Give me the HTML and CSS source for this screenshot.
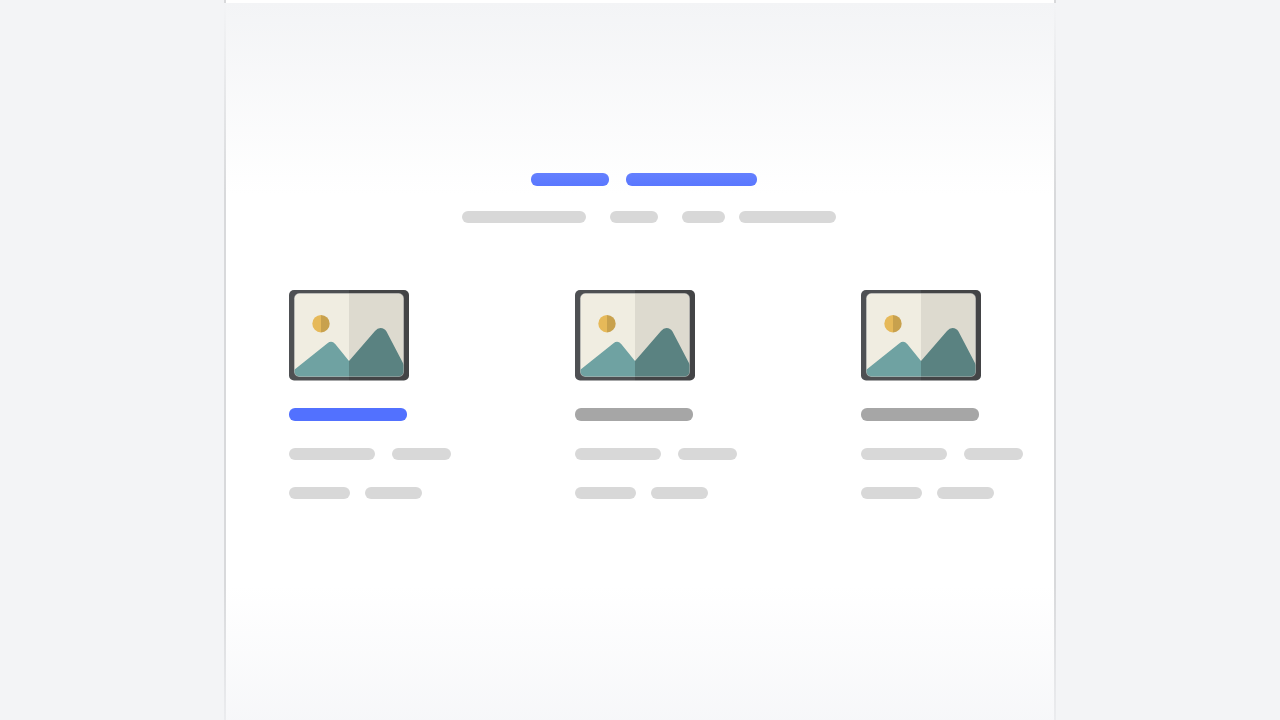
FILE: index.html
```html
<!DOCTYPE html>
<html lang="en">
<head>
<meta charset="utf-8">
<meta name="viewport" content="width=device-width, initial-scale=1">
<title>Page layout</title>
<link rel="stylesheet" href="styles.css">
</head>
<body>
<svg width="0" height="0" class="sprite" aria-hidden="true">
  <defs>
    <clipPath id="canvas"><rect x="5.500" y="3.500" width="109" height="83" rx="5"/></clipPath>
    <clipPath id="frame"><rect x="0" y="0" width="120" height="90.500" rx="5"/></clipPath>
    <symbol id="picture" viewBox="0 0 120 91">
      <g clip-path="url(#frame)">
        <path d="M0 0h60v91H0z" fill="#4e5053"/>
        <path d="M60 0h60v91H60z" fill="#434446"/>
      </g>
      <rect x="5" y="3" width="110" height="84" rx="5.500" fill="#85878a"/>
      <g clip-path="url(#canvas)">
        <path d="M5 3h55v84H5z" fill="#f0ede1"/>
        <path d="M60 3h55v84H60z" fill="#dddacf"/>
        <path d="M5 80L38.500 53.300Q42.500 50 46.200 54L60 71V87H5z" fill="#6fa2a2"/>
        <path d="M60 71L86 41Q88.500 38 91.500 38Q95.500 38 97.500 41.500L115 75V87H60z" fill="#5a8281"/>
      </g>
      <path d="M32 25a8.700 8.700 0 0 0 0 17.400z" fill="#e6b959"/>
      <path d="M32 25a8.700 8.700 0 0 1 0 17.400z" fill="#c8a14d"/>
    </symbol>
  </defs>
</svg>
<main class="sheet">
  <header class="intro">
    <div class="row title">
      <span class="bar accent w78"></span>
      <span class="bar accent w131"></span>
    </div>
    <div class="row subtitle">
      <span class="bar w124"></span>
      <span class="bar w48"></span>
      <span class="bar w43"></span>
      <span class="bar w97"></span>
    </div>
  </header>
  <section class="cards">
    <article class="card">
      <svg class="picture" aria-hidden="true"><use href="#picture"/></svg>
      <span class="bar heading accent"></span>
      <div class="row line"><span class="bar w86"></span><span class="bar w59"></span></div>
      <div class="row line last"><span class="bar w61"></span><span class="bar w57"></span></div>
    </article>
    <article class="card">
      <svg class="picture" aria-hidden="true"><use href="#picture"/></svg>
      <span class="bar heading"></span>
      <div class="row line"><span class="bar w86"></span><span class="bar w59"></span></div>
      <div class="row line last"><span class="bar w61"></span><span class="bar w57"></span></div>
    </article>
    <article class="card">
      <svg class="picture" aria-hidden="true"><use href="#picture"/></svg>
      <span class="bar heading"></span>
      <div class="row line"><span class="bar w86"></span><span class="bar w59"></span></div>
      <div class="row line last"><span class="bar w61"></span><span class="bar w57"></span></div>
    </article>
  </section>
</main>
</body>
</html>
```
FILE: styles.css
```css
* {
  box-sizing: border-box;
}

body {
  margin: 0;
  background: #f3f4f6;
  font-family: "Liberation Sans", Arial, sans-serif;
}

.sprite {
  position: absolute;
}

.sheet {
  position: relative;
  width: 65%;
  min-height: 100vh;
  margin: 0 auto;
  padding: 173px 31px 48px 63px;
  border: solid #d8d9db;
  border-width: 0 2px;
  background: #fff;
}

/* Fades that dissolve the sheet and its borders into the page */
.sheet::before,
.sheet::after {
  content: "";
  position: absolute;
  left: -2px;
  right: -2px;
  pointer-events: none;
}

.sheet::before {
  top: 3px;
  height: 192px;
  background: linear-gradient(#f3f4f6, rgba(243, 244, 246, 0));
}

.sheet::after {
  bottom: 0;
  height: 135px;
  background: linear-gradient(rgba(243, 244, 247, 0), rgba(243, 244, 247, 0.7));
}

.row {
  display: flex;
}

.bar {
  display: block;
  height: 12px;
  border-radius: 6px;
  background: #d8d8d8;
}

.title {
  justify-content: center;
  gap: 17px;
  margin-right: 24px;
}

.title .bar {
  height: 13px;
}

.subtitle {
  justify-content: center;
  gap: 24px;
  margin: 25px 14px 0 0;
}

.subtitle .w97 {
  margin-left: -10px;
}

.bar.accent {
  background: #5271ff;
}

.cards {
  display: flex;
  justify-content: space-between;
  margin-top: 67px;
}

.card {
  width: 162px;
}

.picture {
  display: block;
  width: 120px;
  height: 91px;
}

.heading {
  width: 118px;
  height: 13px;
  margin-top: 27px;
  background: #a6a6a6;
}

.line {
  gap: 17px;
  margin-top: 27px;
}

.line.last {
  gap: 15px;
}

.w43 { width: 43px; }
.w48 { width: 48px; }
.w57 { width: 57px; }
.w59 { width: 59px; }
.w61 { width: 61px; }
.w78 { width: 78px; }
.w86 { width: 86px; }
.w97 { width: 97px; }
.w124 { width: 124px; }
.w131 { width: 131px; }
```
